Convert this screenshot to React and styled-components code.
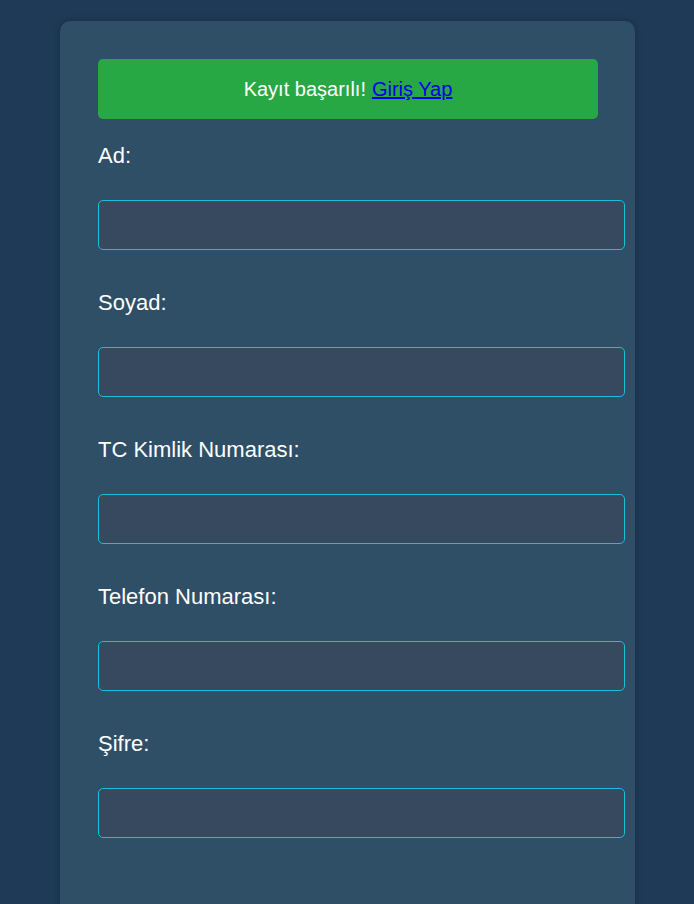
import React from "react";
import styled, { createGlobalStyle } from "styled-components";

const Global = createGlobalStyle`
  html, body {
    margin: 0;
    padding: 0;
    background: #1f3a56;
    font-family: "Liberation Sans", Arial, sans-serif;
    overflow: hidden;
  }
`;

const Page = styled.div`
  display: flex;
  justify-content: flex-start;
  padding: 21px 0 0 60px;
  min-height: 100vh;
  box-sizing: border-box;
`;

const Card = styled.div`
  width: 575px;
  box-sizing: border-box;
  padding: 38px 37px 60px 38px;
  background: #2f4f66;
  border-radius: 10px;
  box-shadow: 0 0 6px rgba(0, 0, 0, 0.25);
`;

const Alert = styled.div`
  height: 60px;
  display: flex;
  align-items: center;
  justify-content: center;
  background: #28a745;
  border-radius: 5px;
  color: #ffffff;
  font-size: 20px;
  margin-bottom: 24px;
  gap: 6px;

  a {
    color: #0000ee;
    text-decoration: underline;
  }
`;

const Field = styled.div`
  display: flex;
  flex-direction: column;
  align-items: flex-start;
  margin-bottom: 40px;
`;

const Label = styled.label`
  color: #ffffff;
  font-size: 22px;
  line-height: 25px;
  margin-bottom: 32px;
`;

const Input = styled.input`
  box-sizing: border-box;
  width: 527px;
  height: 50px;
  padding: 0 12px;
  background: #36495e;
  border: 1px solid #17c0dc;
  border-radius: 5px;
  color: #ffffff;
  font-size: 18px;
  font-family: inherit;
  outline: none;
`;

const fields = [
  { id: "ad", label: "Ad:", type: "text" },
  { id: "soyad", label: "Soyad:", type: "text" },
  { id: "tc", label: "TC Kimlik Numarası:", type: "text" },
  { id: "tel", label: "Telefon Numarası:", type: "tel" },
  { id: "sifre", label: "Şifre:", type: "password" },
];

export default function App() {
  return (
    <>
      <Global />
      <Page>
        <Card>
          <Alert>
            Kayıt başarılı! <a href="#">Giriş Yap</a>
          </Alert>
          {fields.map((f) => (
            <Field key={f.id}>
              <Label htmlFor={f.id}>{f.label}</Label>
              <Input id={f.id} type={f.type} />
            </Field>
          ))}
        </Card>
      </Page>
    </>
  );
}
